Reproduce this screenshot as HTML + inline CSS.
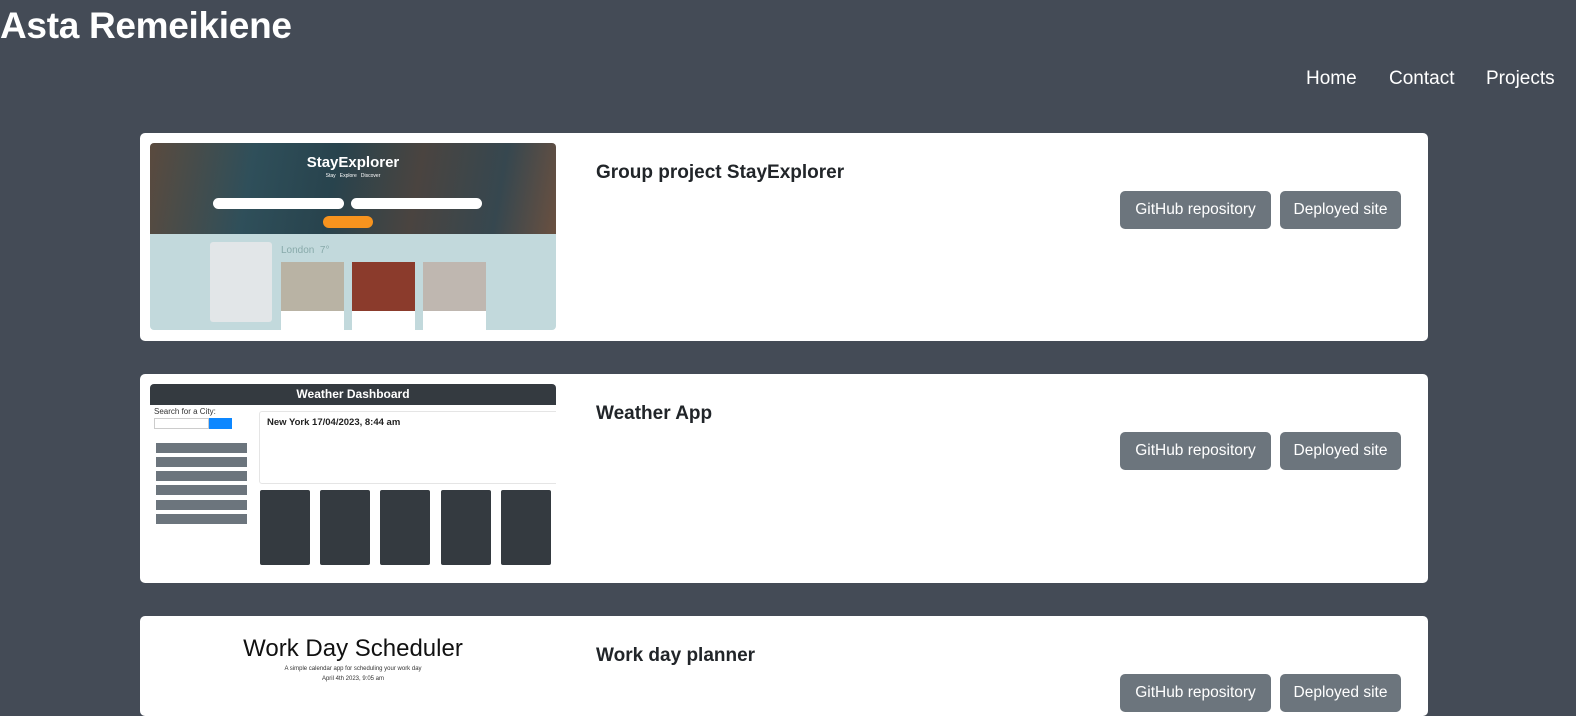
<!DOCTYPE html>
<html><head><meta charset="utf-8"><style>
*{margin:0;padding:0;box-sizing:border-box}
body{width:1576px;height:686px;overflow:hidden;background:#444b56;font-family:"Liberation Sans",sans-serif;position:relative}
h1{position:absolute;left:0;top:5px;color:#fff;font-size:37px;font-weight:bold;letter-spacing:-0.3px}
.nav{position:absolute;top:68px;color:#fff;font-size:19px}
.card{position:absolute;left:140px;width:1288px;background:#fff;border-radius:5px}
.shot{position:absolute;left:10px;top:10px;width:406px;height:187px;overflow:hidden;border-radius:4px}
.ttl{position:absolute;left:456px;top:29px;font-size:19px;color:#212529;font-weight:bold}
.btn{position:absolute;top:58px;height:38px;background:#6c757d;color:#fff;border-radius:5px;font-size:15.5px;line-height:38px;text-align:center}
.a{position:absolute}
.w{position:absolute;background:#343a40;border-radius:2px}
</style></head><body>
<h1>Asta Remeikiene</h1>
<div class="nav" style="left:1306px">Home</div>
<div class="nav" style="left:1389px">Contact</div>
<div class="nav" style="left:1486px">Projects</div>

<div class="card" style="top:133px;height:208px">
 <div class="shot">
  <div class="a" style="left:0;top:0;width:406px;height:91px;background:linear-gradient(100deg,#5a4a3e 0%,#2f4f5a 25%,#28434d 45%,#4a4440 65%,#36474f 85%,#6a5040 100%)"></div>
  <div class="a" style="left:0;top:91px;width:406px;height:96px;background:#c2d9dc"></div>
  <div class="a" style="left:0;top:11px;width:406px;text-align:center;color:#fff;font-size:15px;font-weight:bold">StayExplorer</div>
  <div class="a" style="left:0;top:30px;width:406px;text-align:center;color:#fff;font-size:5px">Stay &nbsp; Explore &nbsp; Discover</div>
  <div class="a" style="left:63px;top:55px;width:131px;height:11px;background:#fff;border-radius:6px"></div>
  <div class="a" style="left:201px;top:55px;width:131px;height:11px;background:#fff;border-radius:6px"></div>
  <div class="a" style="left:173px;top:73px;width:50px;height:12px;background:#f7931e;border-radius:6px"></div>
  <div class="a" style="left:60px;top:99px;width:62px;height:80px;background:#e2e6e8;border-radius:3px"></div>
  <div class="a" style="left:131px;top:102px;font-size:10px;color:#8aa">London &nbsp;7°</div>
  <div class="a" style="left:131px;top:119px;width:63px;height:49px;background:#b9b3a4"></div>
  <div class="a" style="left:202px;top:119px;width:63px;height:49px;background:#8b3b2c"></div>
  <div class="a" style="left:273px;top:119px;width:63px;height:49px;background:#bfb7b0"></div>
  <div class="a" style="left:131px;top:168px;width:63px;height:19px;background:#fff"></div>
  <div class="a" style="left:202px;top:168px;width:63px;height:19px;background:#fff"></div>
  <div class="a" style="left:273px;top:168px;width:63px;height:19px;background:#fff"></div>
 </div>
 <div class="ttl">Group project StayExplorer</div>
 <div class="btn" style="left:980px;width:151px">GitHub repository</div>
 <div class="btn" style="left:1140px;width:121px">Deployed site</div>
</div>

<div class="card" style="top:374px;height:209px">
 <div class="shot" style="height:191px">
  <div class="a" style="left:0;top:0;width:406px;height:21px;background:#343a40;color:#fff;font-size:12px;font-weight:bold;text-align:center;line-height:21px">Weather Dashboard</div>
  <div class="a" style="left:4px;top:23px;font-size:8px;color:#333">Search for a City:</div>
  <div class="a" style="left:4px;top:34px;width:55px;height:11px;border:1px solid #ccc"></div>
  <div class="a" style="left:59px;top:34px;width:23px;height:11px;background:#0d87ff"></div>
  <div class="a" style="left:6px;top:59px;width:91px;height:10px;background:#6c757d"></div>
  <div class="a" style="left:6px;top:73px;width:91px;height:10px;background:#6c757d"></div>
  <div class="a" style="left:6px;top:87px;width:91px;height:10px;background:#6c757d"></div>
  <div class="a" style="left:6px;top:101px;width:91px;height:10px;background:#6c757d"></div>
  <div class="a" style="left:6px;top:116px;width:91px;height:10px;background:#6c757d"></div>
  <div class="a" style="left:6px;top:130px;width:91px;height:10px;background:#6c757d"></div>
  <div class="a" style="left:109px;top:27px;width:300px;height:73px;border:1px solid #e5e5e5;border-radius:3px"></div>
  <div class="a" style="left:117px;top:33px;font-size:9.5px;font-weight:bold;color:#222">New York 17/04/2023, 8:44 am</div>
  <div class="w" style="left:110px;top:106px;width:50px;height:75px"></div>
  <div class="w" style="left:170px;top:106px;width:50px;height:75px"></div>
  <div class="w" style="left:230px;top:106px;width:50px;height:75px"></div>
  <div class="w" style="left:291px;top:106px;width:50px;height:75px"></div>
  <div class="w" style="left:351px;top:106px;width:50px;height:75px"></div>
 </div>
 <div class="ttl">Weather App</div>
 <div class="btn" style="left:980px;width:151px">GitHub repository</div>
 <div class="btn" style="left:1140px;width:121px">Deployed site</div>
</div>

<div class="card" style="top:616px;height:100px">
 <div class="a" style="left:10px;top:19px;width:406px;text-align:center;font-size:24px;color:#111">Work Day Scheduler</div>
 <div class="a" style="left:10px;top:50px;width:406px;text-align:center;font-size:6px;color:#333">A simple calendar app for scheduling your work day</div>
 <div class="a" style="left:10px;top:60px;width:406px;text-align:center;font-size:6px;color:#333">April 4th 2023, 9:05 am</div>
 <div class="ttl">Work day planner</div>
 <div class="btn" style="left:980px;width:151px">GitHub repository</div>
 <div class="btn" style="left:1140px;width:121px">Deployed site</div>
</div>
</body></html>
